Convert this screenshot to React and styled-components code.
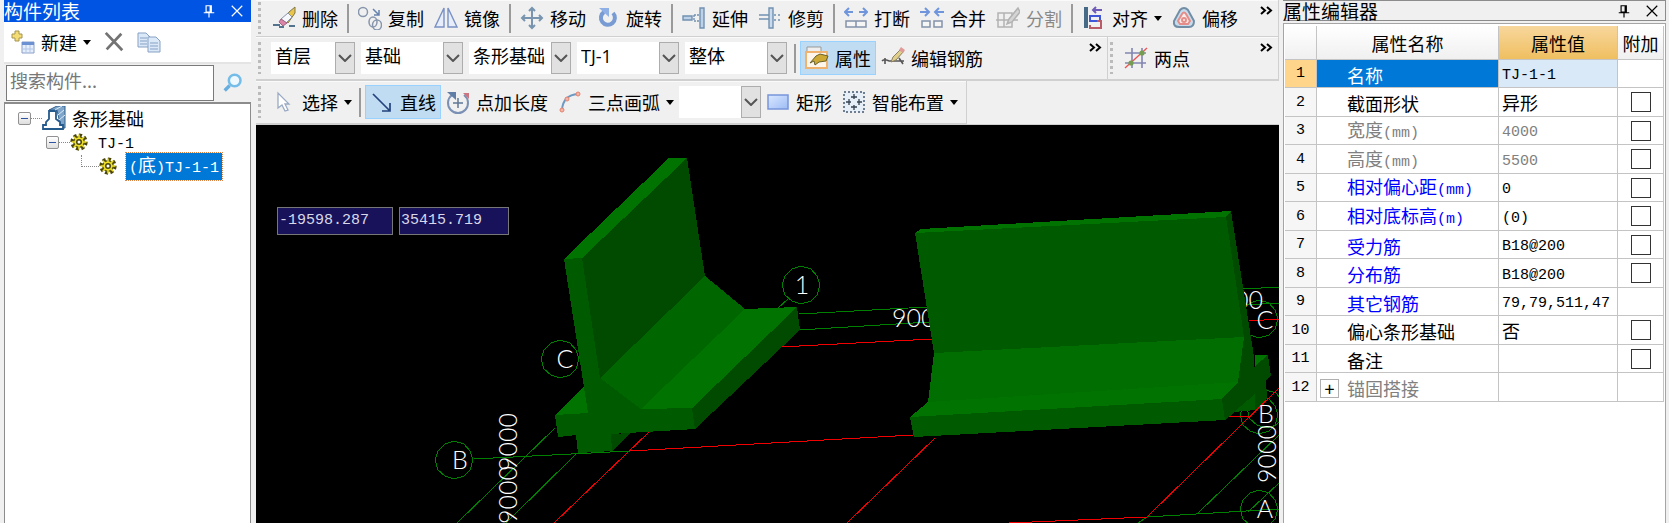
import { useState } from "react";
import styled, { createGlobalStyle, css } from "styled-components";

const components = ["首层", "基础", "条形基础", "TJ-1", "整体"];

const properties = [
  { name: "名称", value: "TJ-1-1", selected: true },
  { name: "截面形状", value: "异形", extra: true },
  { name: "宽度(mm)", value: "4000", extra: true, tone: "muted" },
  { name: "高度(mm)", value: "5500", extra: true, tone: "muted" },
  { name: "相对偏心距(mm)", value: "0", extra: true, tone: "blue" },
  { name: "相对底标高(m)", value: "(0)", extra: true, tone: "blue" },
  { name: "受力筋", value: "B18@200", extra: true, tone: "blue" },
  { name: "分布筋", value: "B18@200", extra: true, tone: "blue" },
  { name: "其它钢筋", value: "79,79,511,47", tone: "blue" },
  { name: "偏心条形基础", value: "否", extra: true },
  { name: "备注", value: "", extra: true },
  { name: "锚固搭接", value: "", tone: "muted", expandable: true },
];

// drawings of the 24px toolbar icons
const icons = {
  erase: (
    <>
      <path d="M1 19h7M7 21h5M17 20h6" stroke="#54748e" strokeWidth="2" />
      <path d="M23 1 17 6l-5 8 4 3 7-10z" fill="#e9c54c" stroke="#80764a" />
      <path d="m16 7-7 6 5 4 6-6z" fill="#f7f8fb" stroke="#8795aa" />
      <path d="m9 13-2 3 4 4 4-3z" fill="#dd83a5" stroke="#9c6685" />
    </>
  ),
  copy: (
    <g fill="none" stroke="#8796ad" strokeWidth="1.5">
      <circle cx="5" cy="6" r="4.5" />
      <path d="m15 3 6 6m0-5v5h-5" stroke="#6483ae" />
      <ellipse cx="15" cy="16" rx="4" ry="5" />
      <ellipse cx="19" cy="19" rx="4.5" ry="5" />
    </g>
  ),
  mirror: (
    <g fill="#e7edfa" stroke="#7890c3" strokeWidth="1.4">
      <path d="M10 2v19H1zM14 2v19h9z" />
    </g>
  ),
  move: (
    <g fill="none" stroke="#7894ae" strokeWidth="2">
      <path d="M12 3v18M3 12h18" />
      <path d="m9 5 3-3 3 3M9 19l3 3 3-3M5 9l-3 3 3 3M19 9l3 3-3 3" />
    </g>
  ),
  rotate: (
    <>
      <path d="M8 6a7 7 0 1 0 9 1" fill="none" stroke="#789bd4" strokeWidth="4" />
      <path d="M3 2h10v9z" fill="#8fb0e6" />
    </>
  ),
  extend: (
    <g fill="none" stroke="#7291b0" strokeWidth="1.4">
      <path d="M1 10h9v4H1zM18 2h4v20h-4z" fill="#bdd2e8" />
      <path d="M12 9h5M12 15h5M12 9v6" strokeDasharray="2 1" />
    </g>
  ),
  trim: (
    <g fill="none" stroke="#7291b0" strokeWidth="1.4">
      <path d="M11 2h4v20h-4z" fill="#c8daec" />
      <path d="M1 9h10M1 13h10" />
      <path d="M16 9h7M16 14h7" strokeDasharray="2 2" />
    </g>
  ),
  break: (
    <g fill="none" stroke="#6f96dc" strokeWidth="2">
      <path d="m5 2-4 4 4 4M1 6h8M19 2l4 4-4 4M23 6h-8" />
      <path d="M2 15h20v6H2zM12 15v6" fill="#f5f5f5" stroke="#8292aa" strokeWidth="1.5" />
    </g>
  ),
  merge: (
    <g fill="none" stroke="#6f96dc" strokeWidth="2">
      <path d="m5 2 4 4-4 4M0 6h8M19 2l-4 4 4 4M24 6h-8" />
      <path d="M2 15h8v6H2zM14 15h8v6h-8z" fill="#f5f5f5" stroke="#8292aa" strokeWidth="1.5" />
    </g>
  ),
  split: (
    <g fill="none" stroke="#b2b2b2" strokeWidth="1.5">
      <path d="M2 7h14v14H2zM0 14h22M8 7v14" />
      <path d="m22 2-9 11-2 5 5-2 8-10z" fill="#d4d4d4" />
    </g>
  ),
  align: (
    <g fill="none" strokeWidth="2">
      <path d="M4 1v21" stroke="#466985" strokeWidth="4" />
      <path d="M8 10h10v5H8z" stroke="#4056d9" />
      <path d="M8 19v3h11v-7h-4" stroke="#b95b69" />
      <path d="M20 4h-9m3-3-3 3 3 3" stroke="#6e5bb5" />
    </g>
  ),
  offset: (
    <g fill="none" strokeWidth="2">
      <path d="M8 4q4-4 8 0l6 11q0 6-5 6H7q-6 0-5-6z" fill="#c7dced" stroke="#718ea6" />
      <path d="M10 8q2-3 4 0l4 7-2 3H8l-2-3z" fill="#faeceb" stroke="#e58e89" />
      <circle cx="12" cy="14" r="2" stroke="#e58e89" />
    </g>
  ),
  property: (
    <>
      <path d="M2 1h14v5H2z" fill="#eee" stroke="#999" />
      <path d="M1 6h21v16H1z" fill="#fff6eb" stroke="#f0b26f" strokeWidth="2" />
      <path d="m5 17 6-7 4-2 8 2-2 5-7 1-4 3-1-4z" fill="#cda934" stroke="#66602a" />
    </>
  ),
  pencil: (
    <>
      <path d="M1 15c3-3 6 0 8 0h14M4 12v6M18 12l4 6" fill="none" stroke="#555" strokeWidth="1.6" />
      <path d="m20 3 3 2-8 9-5 2 2-5z" fill="#dfcf8b" stroke="#8c805e" />
      <path d="m20 1 4 3-2 3-4-3z" fill="#e09b98" />
    </>
  ),
  twoPoint: (
    <>
      <path d="M8 2v20M18 2v20M1 7h21M1 17h21" stroke="#8285b1" strokeWidth="1.6" />
      <path d="M1 22 23 2" stroke="#ed5252" strokeWidth="1.3" />
      <circle cx="7" cy="17" r="2.6" fill="#749d4f" />
      <circle cx="18" cy="7" r="2.6" fill="#749d4f" />
    </>
  ),
  cursor: <path d="M6 3v15l4-3 3 6 3-1-3-6h4z" fill="#fff" stroke="#9aaac4" strokeWidth="1.3" />,
  line: (
    <g fill="none" stroke="#23427e" strokeWidth="1.7">
      <path d="m3 4 17 17m0-8v8h-8" />
    </g>
  ),
  pointLength: (
    <g fill="none" strokeWidth="2">
      <path d="M6 5a10 10 0 1 0 12 0" stroke="#7a90b4" />
      <path d="M12 8v10M7 13h10" stroke="#5e7797" strokeWidth="1.5" />
      <path d="M1 2h9v8z" fill="#607da6" stroke="none" />
      <path d="M17 3h6v6z" fill="#cc7580" stroke="none" />
    </g>
  ),
  arc: (
    <>
      <path d="M4 20Q5 5 20 4" fill="none" stroke="#6e99c3" strokeWidth="2" />
      <g fill="#f5b4a6" stroke="#e1836e">
        <circle cx="4" cy="20" r="2" />
        <circle cx="9" cy="9" r="2" />
        <circle cx="20" cy="4" r="2" />
      </g>
    </>
  ),
  rect: (
    <>
      <defs>
        <linearGradient id="rectFill" x1="0" y1="0" x2="1" y2="1">
          <stop stopColor="#dbe8ff" />
          <stop offset="1" stopColor="#9cbcf5" />
        </linearGradient>
      </defs>
      <path d="M2 5h20v14H2z" fill="url(#rectFill)" stroke="#7895db" strokeWidth="1.5" />
    </>
  ),
  smart: (
    <>
      <path d="M2 2h20v20H2z" fill="#e6eef8" stroke="#6d7d92" strokeWidth="2" strokeDasharray="2 2" />
      <path d="M12 4v5M9 7h6M12 15v5M9 17h6M4 12h5M7 9v6M15 12h5M17 9v6" stroke="#34414f" strokeWidth="1.3" />
    </>
  ),
  create: (
    <>
      <path d="M4 1h4v3h3v4H8v3H4V8H1V4h3z" fill="#f4dc74" stroke="#a59350" />
      <path d="M11 12h12v11H11z" fill="#e5eefc" stroke="#8a9fc7" />
      <path d="M11 12h12v3H11z" fill="#6b91d3" />
      <path d="M15 15v8M19 15v8M11 19h12" stroke="#b3c5e6" />
    </>
  ),
  remove: <path d="m3 2 18 19M20 3 4 20" fill="none" stroke="#737373" strokeWidth="3" />,
  duplicate: (
    <g fill="#dbe8f8" stroke="#87a1c5">
      <path d="M1 3h8l4 4v10H1z" />
      <path d="M3 8h7M3 11h7M3 14h7" />
      <path d="M11 7h8l4 4v11H11z" />
      <path d="M13 13h8M13 16h8M13 19h8" />
    </g>
  ),
  search: (
    <g fill="none" strokeWidth="3">
      <circle cx="14" cy="9" r="7" fill="#edf8ff" stroke="#75bde9" />
      <path d="m8 15-6 6" stroke="#66aee0" strokeWidth="4" />
    </g>
  ),
  footing: (
    <>
      <path d="m7 4 8-4h8v22h-4L15 4z" fill="#7fa6ca" stroke="#315f8c" />
      <path d="M7 5h7v8l4 3v3h3v4H1v-4h3v-3l3-3z" fill="#fff" stroke="#255a8d" strokeWidth="1.8" />
      <path d="m13 4 7-4M16 9l6-5M17 14l6-5" stroke="#dcebf7" />
    </>
  ),
  gear: (
    <>
      <circle cx="12" cy="12" r="9" fill="none" stroke="#4a440a" strokeWidth="5" strokeDasharray="4 3" />
      <circle cx="12" cy="12" r="7" fill="#f1df20" stroke="#615c12" strokeWidth="2" />
      <path d="M12 2v20M2 12h20M5 5l14 14M19 5 5 19" stroke="#ece02d" strokeWidth="2" />
      <circle cx="12" cy="12" r="3" fill="#fff" stroke="#4a440a" strokeWidth="2" />
    </>
  ),
  pin: (
    <g stroke="currentColor" fill="none" strokeWidth="2">
      <path d="M7 3h9v11H7zM14 3v11M3 15h18M12 15v8" />
    </g>
  ),
  close: <path d="m3 3 18 18M21 3 3 21" stroke="currentColor" strokeWidth="2" />,
};

function Icon({ name, size = 24 }) {
  return (
    <Glyph viewBox="0 0 24 24" $size={size} aria-hidden="true">
      {icons[name]}
    </Glyph>
  );
}

// latin runs are set in the narrower fixed-width face
function Mixed({ text }) {
  return text.split(/([\x20-\x7e]+)/).map((part, i) => (i % 2 ? <Mono key={i}>{part}</Mono> : part));
}

function Tool({ icon, label, menu, active, disabled }) {
  return (
    <ToolButton type="button" $active={active} disabled={disabled}>
      <Icon name={icon} />
      <span>{label}</span>
      {menu && <Caret />}
    </ToolButton>
  );
}

function Combo({ value, label, width }) {
  return (
    <ComboBox $width={width}>
      <select aria-label={label} defaultValue={value}>
        <option>{value}</option>
      </select>
      <ComboArrow>
        <svg width="14" height="8" viewBox="0 0 14 8">
          <path d="m1 1 6 6 6-6" fill="none" stroke="#555" strokeWidth="2" />
        </svg>
      </ComboArrow>
    </ComboBox>
  );
}

function More() {
  return (
    <MoreButton type="button" aria-label="more">
      <svg width="13" height="9" viewBox="0 0 13 9">
        <path d="m1 1 4 3.5-4 3.5M7 1l4 3.5-4 3.5" fill="none" stroke="#000" strokeWidth="2" />
      </svg>
    </MoreButton>
  );
}

function ComponentList() {
  return (
    <ListPanel>
      <ListTitle>
        <TitleText>构件列表</TitleText>
        <TitleButton type="button" aria-label="pin"><Icon name="pin" size={14} /></TitleButton>
        <TitleButton type="button" aria-label="close"><Icon name="close" size={14} /></TitleButton>
      </ListTitle>
      <ListTools>
        <PlainButton type="button">
          <Icon name="create" />
          <span>新建</span>
          <Caret />
        </PlainButton>
        <PlainButton type="button" aria-label="delete"><Icon name="remove" size={22} /></PlainButton>
        <PlainButton type="button" aria-label="copy"><Icon name="duplicate" /></PlainButton>
      </ListTools>
      <SearchRow>
        <SearchInput aria-label="search" placeholder="搜索构件..." />
        <SearchButton type="button" aria-label="search"><Icon name="search" size={20} /></SearchButton>
      </SearchRow>
      <Tree>
        <TreeRow $level={0}>
          <Expander type="button" aria-label="collapse" />
          <Branch />
          <Icon name="footing" />
          <TreeLabel>条形基础</TreeLabel>
        </TreeRow>
        <TreeRow $level={1}>
          <Expander type="button" aria-label="collapse" />
          <Branch />
          <Icon name="gear" size={18} />
          <TreeLabel $spaced><Mixed text="TJ-1" /></TreeLabel>
        </TreeRow>
        <TreeRow $level={2}>
          <Elbow />
          <Icon name="gear" size={18} />
          <TreeLabel $selected><Mixed text="(底)TJ-1-1" /></TreeLabel>
        </TreeRow>
      </Tree>
    </ListPanel>
  );
}

function Toolbars() {
  return (
    <ToolbarArea>
      <Toolbar>
        <Grip />
        <Tool icon="erase" label="删除" />
        <Separator />
        <Tool icon="copy" label="复制" />
        <Tool icon="mirror" label="镜像" />
        <Separator />
        <Tool icon="move" label="移动" />
        <Tool icon="rotate" label="旋转" />
        <Separator />
        <Tool icon="extend" label="延伸" />
        <Tool icon="trim" label="修剪" />
        <Separator />
        <Tool icon="break" label="打断" />
        <Tool icon="merge" label="合并" />
        <Tool icon="split" label="分割" disabled />
        <Separator />
        <Tool icon="align" label="对齐" menu />
        <Tool icon="offset" label="偏移" />
        <More />
      </Toolbar>
      <ToolbarLine>
        <Toolbar $grow>
          <Grip />
          <ComboGroup>
            {components.map((name, i) => (
              <Combo key={name} value={name} label={`filter ${i + 1}`} width={i === 0 ? 84 : 102} />
            ))}
          </ComboGroup>
          <Separator />
          <Tool icon="property" label="属性" active />
          <Tool icon="pencil" label="编辑钢筋" />
          <More />
        </Toolbar>
        <Toolbar $width={171}>
          <Grip />
          <Tool icon="twoPoint" label="两点" />
          <More />
        </Toolbar>
      </ToolbarLine>
      <ToolbarLine>
        <Toolbar>
          <Grip />
          <Tool icon="cursor" label="选择" menu />
          <Separator $tight />
          <Tool icon="line" label="直线" active />
          <Tool icon="pointLength" label="点加长度" />
          <Tool icon="arc" label="三点画弧" menu />
          <Combo value="" label="arc mode" width={82} />
          <Tool icon="rect" label="矩形" />
          <Tool icon="smart" label="智能布置" menu />
        </Toolbar>
      </ToolbarLine>
    </ToolbarArea>
  );
}

const ring = (cx, cy) =>
  Array.from({ length: 12 }, (_, i) => {
    const a = (Math.PI * i) / 6;
    return `${Math.round(cx + 19 * Math.sin(a))},${Math.round(cy - 19 * Math.cos(a))}`;
  }).join(" ");

const rings = [[198, 335], [304, 234], [545, 160], [1003, 194], [1003, 290], [1003, 384], [1010, 284]];

function Scene() {
  return (
    <SceneSvg viewBox="0 0 1023 398" preserveAspectRatio="xMinYMin slice">
      <g stroke="#008000" fill="none">
        {rings.map(([x, y]) => (
          <polygon key={`${x}-${y}`} points={ring(x, y)} />
        ))}
        <path d="M299 303 201 398M321 328 250 398M532 174l-10 9" />
        <path d="M543 189 671 182M543 205 673 197M987 164l36-2M990 180l33-2" />
        <path d="M1023 310 942 388M1023 358l-31 29M891 392l132-8M891 392l-9 6" />
      </g>
      <g stroke="#f00000" fill="none">
        <path d="M374 326 657 310M972 292l22-1M524 222 676 214M993 196l30-2" />
        <path d="M393 307 298 398M679 313 591 398M753 398l138-6 132-129" />
      </g>
      <SceneText x="636" y="202">9000</SceneText>
      <SceneText x="1007" y="184" textAnchor="end">9000</SceneText>

      <polygon points="413,33 431,33 326,133 308,134" fill="#007300" />
      <polygon points="431,33 449,151 344,253 326,133" fill="#004b00" />
      <polygon points="449,151 489,184 385,284 344,253" fill="#006600" />
      <polygon points="489,184 541,182 436,283 385,284" fill="#007300" />
      <polygon points="541,182 544,205 439,304 436,283" fill="#004b00" />
      <polygon points="299,290 328,262 332,288" fill="#007300" />
      <polygon points="355,309 375,308 356,326" fill="#004b00" />
      <polygon
        points="308,134 326,133 344,253 385,284 436,283 439,304 355,309 356,326 322,328 320,310 302,312 299,290 332,288"
        fill="#005a00"
      />

      <polygon points="999,230 1012,230 999,241" fill="#007300" />
      <polygon points="999,241 1012,230 1015,251 1010,255 1011,273 999,285 985,286" fill="#004b00" />
      <polygon points="970,92 975,86 998,232 1000,270 969,295 966,274 982,257 988,212" fill="#004b00" />
      <polygon points="978,287 999,269 999,285" fill="#005a00" />
      <polygon points="659,108 665,104 975,86 970,92" fill="#007300" />
      <polygon points="659,108 970,92 988,212 678,228" fill="#005a00" />
      <polygon points="678,228 988,212 982,257 672,277" fill="#006e00" />
      <polygon points="672,277 982,257 966,274 654,292" fill="#007300" />
      <polygon points="654,292 966,274 969,295 658,312" fill="#005a00" />

      <path d="M218 334 374 326" stroke="#008000" />
      <SceneText x="204" y="344" textAnchor="middle">B</SceneText>
      <SceneText x="309" y="243" textAnchor="middle">C</SceneText>
      <SceneText x="546" y="169" textAnchor="middle">1</SceneText>
      <SceneText x="1009" y="204" textAnchor="middle">C</SceneText>
      <SceneText x="1010" y="298" textAnchor="middle">B</SceneText>
      <SceneText x="1009" y="393" textAnchor="middle">A</SceneText>
      <SceneText transform="translate(261 346) rotate(-90)">9000</SceneText>
      <SceneText transform="translate(261 399) rotate(-90)">9000</SceneText>
      <SceneText transform="translate(1020 358) rotate(-90)">9000</SceneText>
    </SceneSvg>
  );
}

function PropertyEditor() {
  const [checked, setChecked] = useState({});
  const toggle = (name) => setChecked({ ...checked, [name]: !checked[name] });

  return (
    <EditorPanel>
      <EditorTitle>
        <TitleText>属性编辑器</TitleText>
        <TitleButton type="button" aria-label="pin"><Icon name="pin" size={14} /></TitleButton>
        <TitleButton type="button" aria-label="close"><Icon name="close" size={14} /></TitleButton>
      </EditorTitle>
      <TableFrame>
        <Table>
          <colgroup>
            <NumberCol />
            <col />
            <ValueCol />
            <ExtraCol />
          </colgroup>
          <thead>
            <tr>
              <HeadCell />
              <HeadCell>属性名称</HeadCell>
              <HeadCell $current>属性值</HeadCell>
              <HeadCell>附加</HeadCell>
            </tr>
          </thead>
          <tbody>
            {properties.map((row, i) => (
              <Row key={row.name}>
                <NumberCell $current={row.selected}>{i + 1}</NumberCell>
                <NameCell $tone={row.tone} $selected={row.selected}>
                  <NameLine>
                    <ExpandSlot>{row.expandable && <PlusButton type="button" aria-label="expand">+</PlusButton>}</ExpandSlot>
                    <span><Mixed text={row.name} /></span>
                  </NameLine>
                </NameCell>
                <ValueCell $tone={row.tone} $selected={row.selected}>
                  <Mixed text={row.value} />
                </ValueCell>
                <ExtraCell>
                  {row.extra && (
                    <Check
                      type="checkbox"
                      aria-label={row.name}
                      checked={!!checked[row.name]}
                      onChange={() => toggle(row.name)}
                    />
                  )}
                </ExtraCell>
              </Row>
            ))}
          </tbody>
        </Table>
      </TableFrame>
    </EditorPanel>
  );
}

function App() {
  return (
    <>
      <GlobalStyle />
      <Screen>
        <ComponentList />
        <Workspace>
          <Toolbars />
          <Viewport>
            <Scene />
            <Coordinates>
              <CoordInput aria-label="X" defaultValue="-19598.287" $width={116} />
              <CoordInput aria-label="Y" defaultValue="35415.719" $width={110} />
            </Coordinates>
          </Viewport>
        </Workspace>
        <PropertyEditor />
      </Screen>
    </>
  );
}

export default App;

const GlobalStyle = createGlobalStyle`
  * {
    box-sizing: border-box;
  }
  body {
    margin: 0;
    background: #f0f0f0;
    color: #000;
    font: 18px/20px "Noto Sans CJK SC", sans-serif;
  }
  button, input, select {
    margin: 0;
    padding: 0;
    border: 0;
    border-radius: 0;
    background: none;
    color: inherit;
    font: inherit;
  }
`;

const Screen = styled.div`
  display: grid;
  grid-template-columns: 256px minmax(0, 1fr) 390px;
  height: 100vh;
  overflow: hidden;
`;

const Glyph = styled.svg`
  flex: none;
  width: ${(p) => p.$size}px;
  height: ${(p) => p.$size}px;
`;

const Mono = styled.span`
  font-family: "Liberation Mono", monospace;
  font-size: 15px;
`;

const Caret = styled.span`
  border: 4px solid transparent;
  border-top: 5px solid #000;
  border-bottom: 0;
`;

const ListPanel = styled.aside`
  display: flex;
  flex-direction: column;
  padding: 0 5px 0 4px;
`;

const ListTitle = styled.header`
  display: flex;
  align-items: center;
  gap: 8px;
  height: 22px;
  padding-right: 4px;
  background: #0054e3;
  color: #fff;
`;

const TitleText = styled.h1`
  flex: 1;
  margin: 0;
  font-size: 19px;
  font-weight: 400;
  line-height: 18px;
`;

const TitleButton = styled.button`
  display: flex;
  padding: 3px;
`;

const ListTools = styled.div`
  display: flex;
  align-items: center;
  gap: 12px;
  height: 42px;
  padding: 0 7px;
  background: #fff;
  border-bottom: 2px solid #e4e4e4;
`;

const PlainButton = styled.button`
  display: flex;
  align-items: center;
  gap: 6px;
`;

const SearchRow = styled.div`
  display: flex;
  padding: 1px 0 1px 2px;
`;

const SearchInput = styled.input`
  flex: 1;
  min-width: 0;
  height: 36px;
  padding: 0 3px 6px;
  border: 1px solid #7a7a7a;
  background: #fff;
  &::placeholder {
    color: #777;
  }
`;

const SearchButton = styled.button`
  display: flex;
  align-items: center;
  justify-content: center;
  width: 37px;
`;

const Tree = styled.div`
  flex: 1;
  padding: 2px 0 0 12px;
  border: 1px solid #8c8c8c;
  border-top-width: 2px;
  border-bottom: 0;
  background: #fff;
`;

const TreeRow = styled.div`
  display: flex;
  align-items: center;
  height: 24px;
  padding-left: ${(p) => [1, 29, 64][p.$level]}px;
`;

const Expander = styled.button`
  display: flex;
  align-items: center;
  justify-content: center;
  width: 13px;
  height: 13px;
  border: 1px solid #919191;
  border-radius: 2px;
  background: linear-gradient(#fff, #dedede);
  &::before {
    content: "";
    width: 7px;
    height: 1px;
    background: #3053a0;
  }
`;

const Branch = styled.span`
  width: 11px;
  border-top: 1px dotted #888;
`;

const Elbow = styled.span`
  width: 18px;
  height: 12px;
  margin-bottom: 10px;
  border: 1px dotted #888;
  border-width: 0 0 1px 1px;
`;

const TreeLabel = styled.span`
  margin-left: ${(p) => (p.$spaced || p.$selected ? 9 : 5)}px;
  padding: 0 1px;
  ${(p) =>
    p.$selected &&
    css`
      padding: 1px 3px;
      outline: 1px dotted #d98244;
      background: #0078d7;
      color: #fff;
    `}
`;

const Workspace = styled.main`
  display: flex;
  flex-direction: column;
  min-width: 0;
`;

const ToolbarArea = styled.div`
  display: grid;
  grid-template-rows: 37px 44px 44px;
`;

const ToolbarLine = styled.div`
  display: flex;
  border-bottom: 1px solid #d0d0d0;
`;

const Toolbar = styled.div`
  display: flex;
  align-items: center;
  flex: ${(p) => (p.$grow ? 1 : "none")};
  width: ${(p) => (p.$width ? `${p.$width}px` : "auto")};
  min-width: 0;
  padding-right: 3px;
  border: 1px solid #d0d0d0;
  border-width: 0 1px 1px 0;
  box-shadow: inset 0 1px #fafafa;
`;

const Grip = styled.span`
  flex: none;
  width: 3px;
  height: 32px;
  margin: 0 6px 0 2px;
  background: repeating-linear-gradient(#bbb 0 3px, transparent 3px 6px);
`;

const Separator = styled.span`
  flex: none;
  width: 2px;
  height: 29px;
  margin: ${(p) => (p.$tight ? "0 4px 0 2px" : "0 4px")};
  background: #9a9a9a;
`;

const ToolButton = styled.button`
  display: flex;
  flex: none;
  align-items: center;
  gap: 6px;
  height: 34px;
  padding: 0 4px;
  border: 1px solid ${(p) => (p.$active ? "#99d1ff" : "transparent")};
  background: ${(p) => (p.$active ? "#bfdcf2" : "none")};
  white-space: nowrap;
  &:disabled {
    color: #888;
  }
`;

const MoreButton = styled.button`
  display: flex;
  align-self: flex-start;
  margin-left: auto;
  padding: 6px 2px 6px 0;
`;

const ComboGroup = styled.div`
  display: flex;
  gap: 6px;
  padding: 0 3px 0 4px;
`;

const ComboBox = styled.span`
  display: grid;
  flex: none;
  width: ${(p) => p.$width}px;
  height: 32px;
  background: #fff;
  select {
    grid-area: 1 / 1;
    min-width: 0;
    padding: 0 22px 4px 4px;
    appearance: none;
    font-family: "Open Sans", "Noto Sans CJK SC", sans-serif;
  }
`;

const ComboArrow = styled.span`
  display: flex;
  grid-area: 1 / 1;
  align-items: center;
  justify-content: center;
  justify-self: end;
  width: 20px;
  border: 1px solid #adadad;
  background: #e1e1e1;
  pointer-events: none;
`;

const Viewport = styled.section`
  position: relative;
  flex: 1;
  min-height: 0;
  overflow: hidden;
  background: #000;
`;

const SceneSvg = styled.svg`
  display: block;
  width: 100%;
  height: 100%;
  shape-rendering: crispEdges;
`;

const SceneText = styled.text`
  fill: #fff;
  font: 300 25px Lato, sans-serif;
`;

const Coordinates = styled.div`
  position: absolute;
  top: 82px;
  left: 21px;
  display: flex;
  gap: 6px;
`;

const CoordInput = styled.input`
  width: ${(p) => p.$width}px;
  height: 28px;
  padding: 0 1px 2px;
  border: 1px solid #777;
  background: #17125a;
  color: #d8d8e8;
  font: 15px "Liberation Mono", monospace;
`;

const EditorPanel = styled.aside`
  display: flex;
  flex-direction: column;
  padding: 0 3px 0 4px;
`;

const EditorTitle = styled.header`
  display: flex;
  align-items: center;
  gap: 8px;
  height: 21px;
  padding-right: 3px;
  border: 1px solid #8c8c8c;
  border-width: 1px 1px 1px 0;
`;

const TableFrame = styled.div`
  flex: 1;
  margin-top: 2px;
  padding: 2px 1px 0;
  border: 1px solid #a5a5a5;
  border-bottom: 0;
  background: #fff;
`;

const Table = styled.table`
  width: 100%;
  border-collapse: separate;
  border-spacing: 0;
  table-layout: fixed;
`;

const NumberCol = styled.col`
  width: 32px;
`;

const ValueCol = styled.col`
  width: 119px;
`;

const ExtraCol = styled.col`
  width: 46px;
`;

const cell = css`
  padding: 0;
  border: 1px solid #c4c4c4;
  border-width: 0 1px 1px 0;
  font-weight: 400;
  white-space: nowrap;
`;

const HeadCell = styled.th`
  ${cell}
  height: 34px;
  background: ${(p) => (p.$current ? "linear-gradient(#f8d79d, #efbf60)" : "linear-gradient(#fff, #f0f0f0)")};
`;

const Row = styled.tr`
  height: 28px;
  &:nth-child(even) {
    height: 29px;
  }
`;

const NumberCell = styled.th`
  ${cell}
  background: ${(p) => (p.$current ? "#ffd58c" : "#f6f6f6")};
  font: 400 15px "Liberation Mono", monospace;
`;

const tones = { muted: "#808080", blue: "#0000ff" };

const NameCell = styled.td`
  ${cell}
  background: ${(p) => (p.$selected ? "#0078d7" : "#fff")};
  color: ${(p) => (p.$selected ? "#fff" : tones[p.$tone] || "#000")};
`;

const NameLine = styled.div`
  display: flex;
  align-items: center;
  padding-top: 2px;
`;

const ExpandSlot = styled.span`
  display: flex;
  width: 30px;
  padding-left: 3px;
`;

const PlusButton = styled.button`
  width: 19px;
  height: 19px;
  border: 1px solid #b0b0b0;
  color: #000;
  line-height: 14px;
`;

const ValueCell = styled.td`
  ${cell}
  padding-left: 3px;
  background: ${(p) => (p.$selected ? "#d9e9f7" : "#fff")};
  color: ${(p) => (p.$tone === "muted" ? tones.muted : "#000")};
`;

const ExtraCell = styled.td`
  ${cell}
  text-align: center;
`;

const Check = styled.input`
  display: block;
  width: 20px;
  height: 20px;
  margin: 0 auto;
  border: 1px solid #333;
  background: #fff;
  appearance: none;
  &:checked {
    box-shadow: inset 0 0 0 4px #fff;
    background: #333;
  }
`;
